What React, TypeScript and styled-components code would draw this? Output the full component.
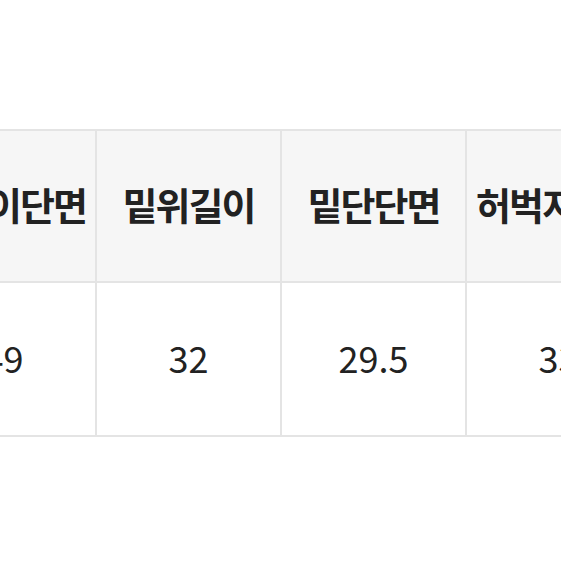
import styled, { createGlobalStyle } from 'styled-components'

const GlobalStyle = createGlobalStyle`
  body {
    margin: 0;
    background: #ffffff;
    font-family: 'Noto Sans CJK KR', 'Noto Sans', sans-serif;
  }
`

const Viewport = styled.div`
  width: 561px;
  height: 561px;
  overflow: hidden;
  padding-top: 129px;
  box-sizing: border-box;
`

const SizeTable = styled.div`
  display: grid;
  grid-template-columns: repeat(4, 185px);
  margin-left: -90px;
  width: max-content;
  border-top: 2px solid #e4e4e4;
  border-left: 2px solid #e4e4e4;
`

const Cell = styled.div<{ $head?: boolean }>`
  box-sizing: border-box;
  height: ${(p) => (p.$head ? '152px' : '154px')};
  display: flex;
  align-items: center;
  justify-content: center;
  border-right: 2px solid #e4e4e4;
  border-bottom: 2px solid #e4e4e4;
  background: ${(p) => (p.$head ? '#f6f6f6' : '#ffffff')};
  color: #222222;
  white-space: nowrap;
  font-size: ${(p) => (p.$head ? '38px' : '36px')};
  font-weight: ${(p) => (p.$head ? 700 : 400)};
  letter-spacing: ${(p) => (p.$head ? '-2px' : '0')};
  padding-bottom: ${(p) => (p.$head ? '6px' : '4px')};
`

const headers = ['엉덩이단면', '밑위길이', '밑단단면', '허벅지단면']
const values = ['49', '32', '29.5', '33']

const App = () => {
  return (
    <>
      <GlobalStyle />
      <Viewport>
        <SizeTable>
          {headers.map((h) => (
            <Cell $head key={h}>
              {h}
            </Cell>
          ))}
          {values.map((v, i) => (
            <Cell key={i}>{v}</Cell>
          ))}
        </SizeTable>
      </Viewport>
    </>
  )
}

export default App
